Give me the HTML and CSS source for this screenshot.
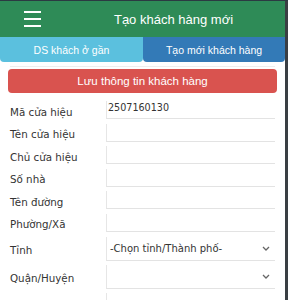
FILE: index.html
```html
<!DOCTYPE html>
<html>
<head>
<meta charset="utf-8">
<link rel="stylesheet" href="styles.css">
</head>
<body>
<div class="app">
  <div class="main">
    <header class="topbar">
      <div class="burger"><span></span><span></span><span></span></div>
      <div class="title">Tạo khách hàng mới</div>
    </header>
    <nav class="tabs">
      <div class="tab tab-near">DS khách ở gần</div>
      <div class="tab tab-new">Tạo mới khách hàng</div>
    </nav>
    <div class="divider"></div>
    <div class="save">Lưu thông tin khách hàng</div>
    <form class="form">
      <div class="row"><label>Mã cửa hiệu</label><div class="field">2507160130</div></div>
      <div class="row"><label>Tên cửa hiệu</label><div class="field"></div></div>
      <div class="row"><label>Chủ cửa hiệu</label><div class="field"></div></div>
      <div class="row"><label>Số nhà</label><div class="field"></div></div>
      <div class="row"><label>Tên đường</label><div class="field"></div></div>
      <div class="row"><label>Phường/Xã</label><div class="field"></div></div>
      <div class="row sel"><label>Tỉnh</label><div class="field select"><span>-Chọn tỉnh/Thành phố-</span><svg class="chev" width="8" height="5" viewBox="0 0 8 5"><path d="M1 1l3 3 3-3" fill="none" stroke="#666" stroke-width="1.3"/></svg></div></div>
      <div class="row sel"><label>Quận/Huyện</label><div class="field select"><span></span><svg class="chev" width="8" height="5" viewBox="0 0 8 5"><path d="M1 1l3 3 3-3" fill="none" stroke="#666" stroke-width="1.3"/></svg></div></div>
      <div class="row"><label></label><div class="field"></div></div>
    </form>
  </div>
  <div class="edge"></div>
</div>
</body>
</html>
```
FILE: styles.css
```css
html, body { margin: 0; padding: 0; background: #fff; }
body { width: 288px; height: 300px; overflow: hidden; font-family: "Liberation Sans", Arial, sans-serif; }
.app { display: flex; height: 300px; border-top: 1px solid #2b3a42; box-sizing: border-box; }
.main { flex: 1; min-width: 0; }
.edge { width: 3px; background: #3a3f44; }
.topbar { height: 36px; background: #2e8b57; display: flex; align-items: center; position: relative; }
.burger { width: 17px; margin-left: 24px; display: flex; flex-direction: column; gap: 5px; }
.burger span { display: block; height: 2px; background: #fff; }
.title { position: absolute; left: 0; right: 0; text-align: center; padding-left: 62px; color: #fff; font-size: 13px; }
.tabs { display: flex; height: 25px; }
.tab { color: #fff; font-size: 10.5px; display: flex; align-items: center; justify-content: center; border-radius: 0 0 4px 4px; }
.tab-near { width: 143px; background: #5bc0de; }
.tab-new { flex: 1; background: #337ab7; }
.divider { height: 1px; background: #eee; margin: 4px 10px 2px; }
.save { margin: 0 8px 0 8px; height: 24px; background: #d9534f; border-radius: 4px; color: #fff; font-size: 11.5px; display: flex; align-items: center; justify-content: center; }
.form { margin: 8px 0 0; }
.row { display: flex; height: 18px; margin-bottom: 4.6px; align-items: stretch; }
.row.sel { height: 24px; margin-bottom: 4px; }
.row label { width: 106px; padding-left: 10px; box-sizing: border-box; font-family: "DejaVu Sans", sans-serif; font-size: 10.3px; color: #333; display: flex; align-items: center; padding-top: 3px; }
.field { width: 169px; border-left: 1px solid #e6e6e6; border-bottom: 1px solid #e3e3e3; box-sizing: border-box; font-family: "DejaVu Sans", sans-serif; font-size: 9.6px; color: #333; padding: 1px 0 0 1px; }
.select { display: flex; align-items: center; justify-content: space-between; padding: 0 4px 0 3px; font-size: 10px; }
.chev { margin-right: 1px; }
```
